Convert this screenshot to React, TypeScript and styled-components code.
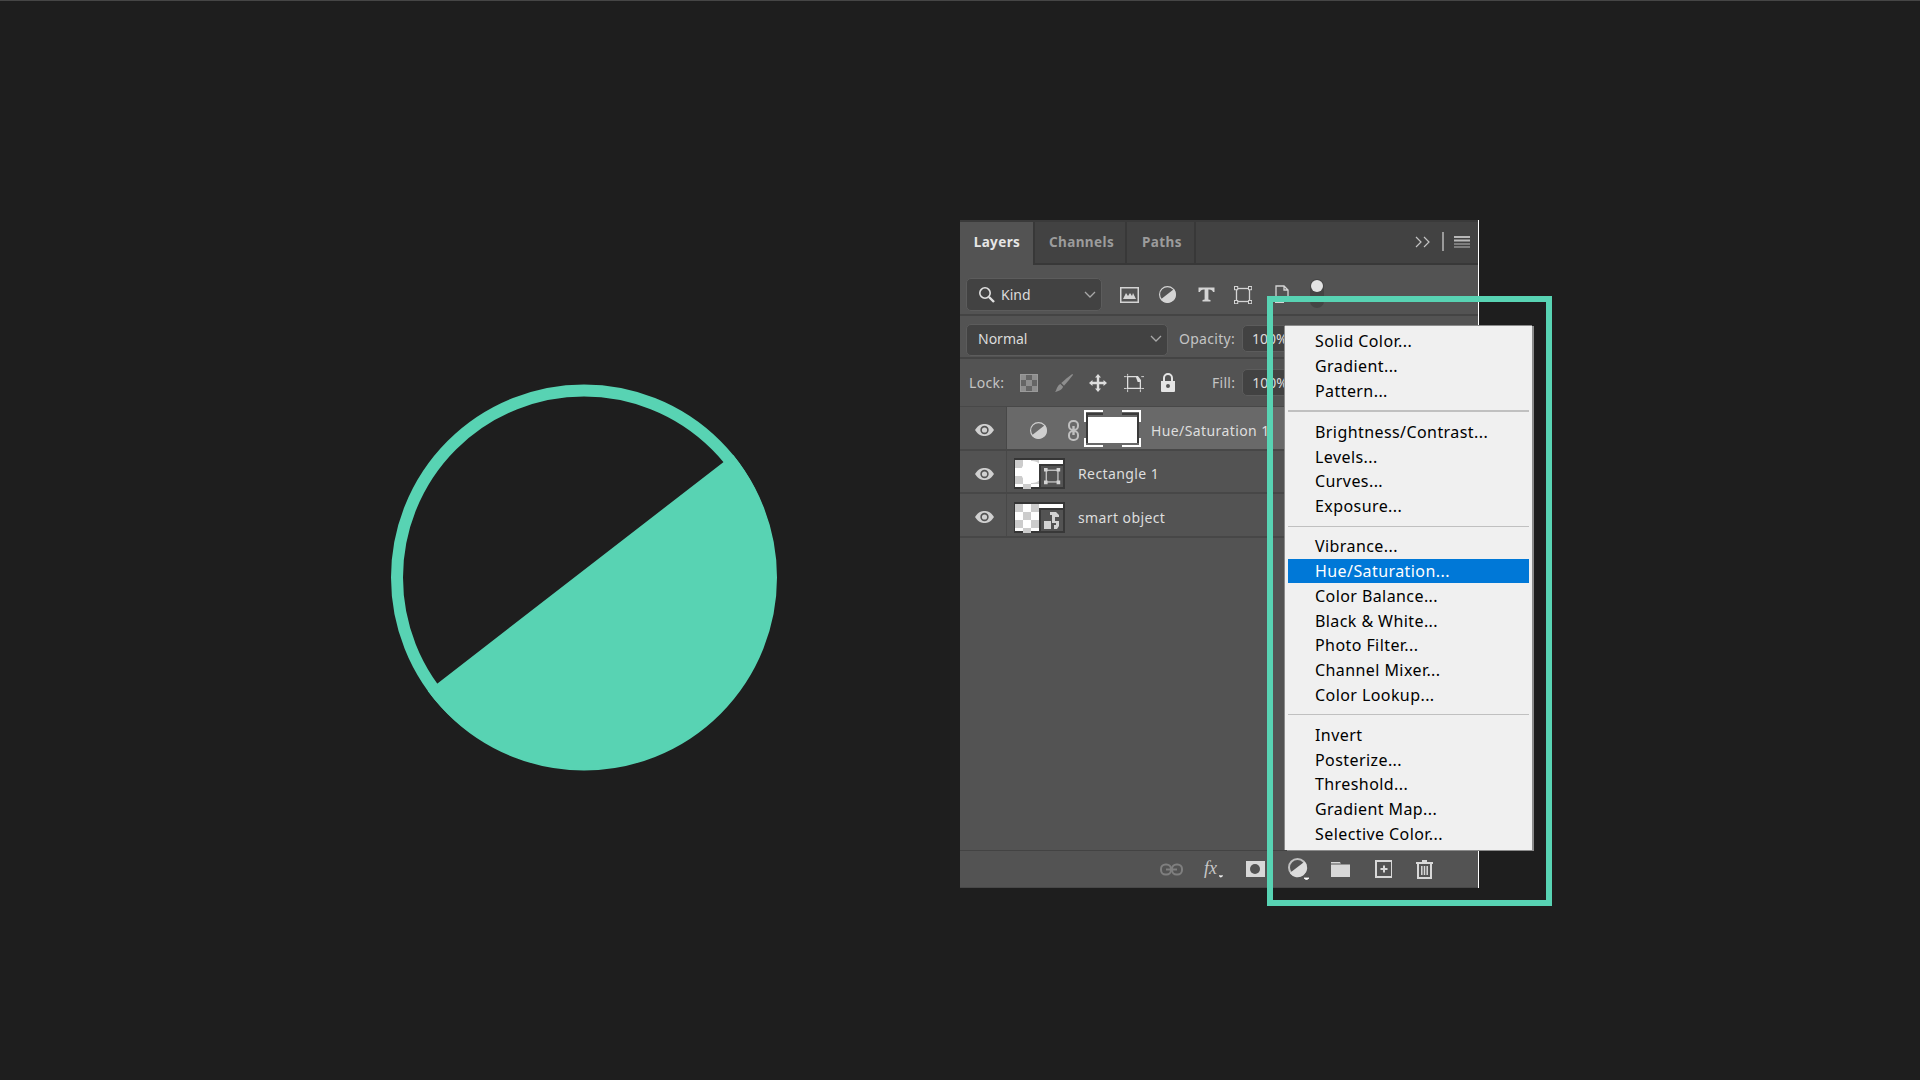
import React from 'react';
import styled, { createGlobalStyle } from 'styled-components';

const Global = createGlobalStyle`
  html, body { margin: 0; padding: 0; background: #1e1e1e; }
  body { font-family: "Noto Sans", "Liberation Sans", sans-serif; }
`;

const Stage = styled.div`
  box-sizing: border-box;
  width: 1920px;
  height: 1080px;
  overflow: hidden;
  display: flex;
  align-items: flex-start;
  background: #1e1e1e;
  border-top: 1px solid #464646;
`;

const Logo = styled.svg`
  flex: none;
  margin: 383px 0 0 391px;
`;

const Panel = styled.div`
  position: relative;
  flex: none;
  box-sizing: border-box;
  width: 519px;
  height: 668px;
  margin: 219px 0 0 183px;
  display: flex;
  flex-direction: column;
  background: #535353;
  border-right: 1px solid #ffffff;
`;

const TabBar = styled.div`
  box-sizing: border-box;
  height: 45px;
  flex: none;
  display: flex;
  background: #424242;
  border-top: 2px solid #3a3a3a;
  border-bottom: 2px solid #383838;
`;

const Tab = styled.div<{ $active?: boolean; $w: number }>`
  box-sizing: border-box;
  width: ${p => p.$w}px;
  height: ${p => (p.$active ? 43 : 41)}px;
  display: flex;
  align-items: center;
  justify-content: center;
  font: 700 13.5px "Noto Sans", sans-serif;
  letter-spacing: 0.4px;
  color: ${p => (p.$active ? '#e6e6e6' : '#9c9c9c')};
  background: ${p => (p.$active ? '#535353' : '#424242')};
  border-right: 2px solid #383838;
  position: relative;
  padding-bottom: ${p => (p.$active ? 4 : 2)}px;
  padding-left: ${p => (p.$active ? 1 : 3)}px;
`;

const TabActions = styled.div`
  margin-left: auto;
  display: flex;
  align-items: center;
  padding: 0 8px 2px 0;
  gap: 10px;
`;

const Divider = styled.div`
  width: 2px;
  height: 19px;
  margin-left: 1px;
  background: #9a9a9a;
`;

const FilterRow = styled.div`
  box-sizing: border-box;
  flex: none;
  height: 51px;
  padding: 13px 0 0 6px;
  display: flex;
  align-items: flex-start;
  border-bottom: 2px solid #444444;
`;

const BlendRow = styled.div`
  box-sizing: border-box;
  flex: none;
  height: 43px;
  padding: 7px 0 0 6px;
  display: flex;
  align-items: center;
  border-bottom: 2px solid #444444;
`;

const LockRow = styled.div`
  box-sizing: border-box;
  flex: none;
  height: 48px;
  padding: 0 0 0 9px;
  display: flex;
  align-items: center;
  border-bottom: 1px solid #484848;
`;

const Select = styled.div<{ $w: number; $h: number; $pad: number; $pb?: number }>`
  box-sizing: border-box;
  width: ${p => p.$w}px;
  height: ${p => p.$h}px;
  flex: none;
  display: flex;
  align-items: center;
  gap: 6px;
  padding: 0 5px ${p => p.$pb ?? 0}px ${p => p.$pad}px;
  background: #424242;
  border: 1.5px solid #5c5c5c;
  border-radius: 5px;
`;

const SelectLabel = styled.span`
  font: 400 14px "Noto Sans", sans-serif;
  color: #dcdcdc;
  flex: 1;
`;

const Label = styled.span<{ $w?: number; $ml?: number; $pb?: number }>`
  flex: none;
  font: 400 14px "Noto Sans", sans-serif;
  color: #c4c4c4;
  letter-spacing: 0.3px;
  margin-left: ${p => p.$ml ?? 0}px;
  padding-bottom: ${p => p.$pb ?? 0}px;
  width: ${p => (p.$w ? `${p.$w}px` : 'auto')};
  text-align: right;
`;

const NumberBox = styled.div<{ $mt?: number }>`
  box-sizing: border-box;
  flex: none;
  width: 60px;
  height: 27px;
  margin: ${p => p.$mt ?? 0}px 0 0 7px;
  padding-left: 9px;
  display: flex;
  align-items: center;
  background: #424242;
  border: 1.5px solid #5c5c5c;
  border-radius: 5px;
  font: 400 14px "Noto Sans", sans-serif;
  color: #dcdcdc;
`;

const Slot = styled.div<{ $ml?: number; $w?: number }>`
  flex: none;
  width: ${p => p.$w ?? 20}px;
  margin-left: ${p => p.$ml ?? 0}px;
  display: flex;
  align-items: center;
  justify-content: center;
`;

const FilterIcons = styled.div`
  height: 33px;
  display: flex;
  align-items: center;
`;

const Toggle = styled.div`
  position: relative;
  box-sizing: border-box;
  flex: none;
  width: 14px;
  height: 29px;
  margin: 1px 0 0 18px;
  background: #444444;
  border-radius: 7px;
`;

const ToggleKnob = styled.div`
  position: absolute;
  left: 1px;
  top: 1px;
  width: 12px;
  height: 12px;
  border-radius: 50%;
  background: #e2e2e2;
`;

const LayerRow = styled.div<{ $h: number }>`
  box-sizing: border-box;
  flex: none;
  height: ${p => p.$h}px;
  display: flex;
  align-items: stretch;
  border-bottom: 2px solid #474747;
`;

const EyeCell = styled.div`
  box-sizing: border-box;
  flex: none;
  width: 47px;
  padding: 4px 0 0 2px;
  display: flex;
  align-items: center;
  justify-content: center;
  border-right: 1px solid #484848;
`;

const LayerBody = styled.div<{ $selected?: boolean }>`
  flex: 1;
  min-width: 0;
  padding-top: 4px;
  display: flex;
  align-items: center;
  white-space: nowrap;
  overflow: hidden;
  background: ${p => (p.$selected ? '#696969' : '#535353')};
`;

const LayerName = styled.span<{ $ml: number }>`
  flex: none;
  margin-left: ${p => p.$ml}px;
  font: 400 14px "Noto Sans", sans-serif;
  letter-spacing: 0.4px;
  color: #dedede;
`;

const IconBox = styled.div<{ $ml: number; $mt?: number }>`
  flex: none;
  margin-left: ${p => p.$ml}px;
  margin-top: ${p => p.$mt ?? 0}px;
  display: flex;
  align-items: center;
`;

const Spacer = styled.div`
  flex: 1;
`;

const BottomBar = styled.div`
  box-sizing: border-box;
  flex: none;
  height: 38px;
  padding-left: 199px;
  display: flex;
  align-items: center;
  border-top: 1px solid #434343;
  border-bottom: 1px solid #484848;
`;

const BottomSlot = styled.div`
  flex: none;
  width: 24px;
  margin-right: 18.3px;
  display: flex;
  justify-content: center;
  align-items: center;
`;

const Frame = styled.div`
  position: absolute;
  box-sizing: border-box;
  left: 307px;
  top: 76px;
  width: 285px;
  height: 610px;
  border: 6px solid #58d3b3;
  pointer-events: none;
  z-index: 2;
`;

const Menu = styled.div`
  position: absolute;
  z-index: 3;
  left: 325px;
  top: 106px;
  width: 247px;
  box-sizing: border-box;
  padding: 3px 3px 4px;
  background: #f0f0f0;
  box-shadow: 2px 0 0 #8b8b8b, 0 -1px 0 #8b8b8b, -1px 0 0 #8b8b8b, 2px 1px 0 #8b8b8b;
`;

const MenuItem = styled.div<{ $active?: boolean }>`
  height: 24.72px;
  padding-left: 27px;
  display: flex;
  align-items: center;
  font: 400 16px "Noto Sans", sans-serif;
  letter-spacing: 0.42px;
  white-space: nowrap;
  color: ${p => (p.$active ? '#ffffff' : '#000000')};
  background: ${p => (p.$active ? '#0078d7' : 'transparent')};
`;

const MenuSep = styled.div<{ $h?: number }>`
  height: ${p => p.$h ?? 1}px;
  margin: 7px 0 7.5px;
  background: #c0c0c0;
`;

const Tick = styled.div<{ $top: number }>`
  position: absolute;
  left: 573px;
  top: ${p => p.$top}px;
  width: 1px;
  height: 10px;
  background: #5a5a5a;
`;

const Grip = styled.div`
  position: absolute;
  z-index: 1;
  left: 452px;
  top: 630px;
  width: 14px;
  border-top: 1px dotted #8a8a8a;
`;

const G = '#d4d4d4';

const HalfCircle = ({ size, color, stroke }: { size: number; color: string; stroke: number }) => (
  <svg width={size} height={size} viewBox="0 0 386 386">
    <circle cx="193" cy="193" r={193 - stroke / 2} fill="none" stroke={color} strokeWidth={stroke} />
    <path d="M342 70 L37 306.5 A193 193 0 1 0 342 70 Z" fill={color} />
  </svg>
);

const Chevron = () => (
  <svg width="12" height="7" viewBox="0 0 12 7">
    <path d="M1 1 L6 6 L11 1" fill="none" stroke="#a8a8a8" strokeWidth="1.3" />
  </svg>
);

const Search = () => (
  <svg width="17" height="17" viewBox="0 0 17 17" style={{ flex: 'none' }}>
    <circle cx="7" cy="7" r="5.2" fill="none" stroke="#e0e0e0" strokeWidth="1.6" />
    <path d="M11 11 L16 16" stroke="#e0e0e0" strokeWidth="2.4" />
  </svg>
);

const Collapse = () => (
  <svg width="16" height="12" viewBox="0 0 16 12">
    <path d="M1 1 L6 6 L1 11 M9 1 L14 6 L9 11" fill="none" stroke="#c4c4c4" strokeWidth="1.2" />
  </svg>
);

const Hamburger = () => (
  <svg width="16" height="12" viewBox="0 0 16 12">
    <path d="M0 1 H16 M0 4.5 H16" stroke="#b8b8b8" strokeWidth="2" />
    <path d="M0 8 H16 M0 11 H16" stroke="#b8b8b8" strokeWidth="1" />
  </svg>
);

const ImageIcon = () => (
  <svg width="19" height="16" viewBox="0 0 19 16">
    <rect x="0.75" y="0.75" width="17.5" height="14.5" fill="none" stroke={G} strokeWidth="1.5" />
    <path d="M3 12 L6 6 L8 9 L10 6 L12 9 L13 6 L16 12 Z" fill={G} />
  </svg>
);

const TypeIcon = () => (
  <svg width="17" height="15" viewBox="0 0 17 15">
    <path d="M0.5 0.5 H16.5 V5 H15 Q14.5 2.5 11 2.5 H10.4 V12.5 L12.5 13 V14.5 H4.5 V13 L6.6 12.5 V2.5 H6 Q2.5 2.5 2 5 H0.5 Z" fill={G} />
  </svg>
);

const ShapeIcon = ({ color = G, size = 18 }: { color?: string; size?: number }) => (
  <svg width={size} height={size} viewBox="0 0 18 18">
    <rect x="2.5" y="2.5" width="13" height="13" fill="none" stroke={color} strokeWidth="1.3" />
    {[[0, 0], [14, 0], [0, 14], [14, 14]].map(([x, y]) => (
      <rect key={`${x}-${y}`} x={x + 0.5} y={y + 0.5} width="3.2" height="3.2" fill="#535353" stroke={color} strokeWidth="1" />
    ))}
  </svg>
);

const DocIcon = () => (
  <svg width="14" height="19" viewBox="0 0 14 19">
    <path d="M1 1 H9 L13 5 V15 H1 Z M9 1 V5 H13" fill="none" stroke={G} strokeWidth="1.3" />
    <rect x="0" y="15" width="9" height="3" fill={G} />
  </svg>
);

const CheckerIcon = () => (
  <svg width="18" height="18" viewBox="0 0 18 18">
    <rect x="0.5" y="0.5" width="17" height="17" fill="#8e8e8e" stroke="#9a9a9a" />
    <path d="M6 1 H12 V6 H6 Z M1 6 H6 V12 H1 Z M12 6 H17 V12 H12 Z M6 12 H12 V17 H6 Z" fill="#656565" />
  </svg>
);

const BrushIcon = () => (
  <svg width="22" height="22" viewBox="0 0 22 22">
    <path d="M20 1 L21 2 C18 6 14 11 11 14 L8 11 C11 8 16 4 20 1 Z" fill="#8e8e8e" />
    <path d="M7 12 L10 15 C9 18 5 20 1 21 C3 19 3 14 7 12 Z" fill="#8e8e8e" />
  </svg>
);

const MoveIcon = () => (
  <svg width="20" height="20" viewBox="0 0 20 20">
    <path d="M10 1 L13 4.5 H11.2 V8.8 H15.5 V7 L19 10 L15.5 13 V11.2 H11.2 V15.5 H13 L10 19 L7 15.5 H8.8 V11.2 H4.5 V13 L1 10 L4.5 7 V8.8 H8.8 V4.5 H7 Z" fill="#dedede" />
  </svg>
);

const ArtboardIcon = () => (
  <svg width="22" height="20" viewBox="0 0 22 20">
    <path d="M4 3 H15 L18 7 V16 H4 Z" fill="none" stroke="#dedede" strokeWidth="1.4" />
    <path d="M13 3 H15 L18 7 V9 H15 Z" fill="#dedede" />
    <path d="M0 3 H3 M19 16 H22 M4 0 V2 M4 17 V20 M18 17 V20 M0 16 H3 M19 3 H22" stroke="#dedede" strokeWidth="1" />
  </svg>
);

const LockIcon = () => (
  <svg width="16" height="19" viewBox="0 0 16 19">
    <path d="M4 8 V5 A4 4 0 0 1 12 5 V8" fill="none" stroke="#e4e4e4" strokeWidth="2" />
    <path d="M1 8 H15 V18 A1 1 0 0 1 14 19 H2 A1 1 0 0 1 1 18 Z M8 11 A1.6 1.6 0 0 0 8 15 A1.6 1.6 0 0 0 8 11 Z" fill="#e4e4e4" fillRule="evenodd" />
  </svg>
);

const Eye = () => (
  <svg width="21" height="14" viewBox="0 0 20 14">
    <path d="M0.5 7 C4 1.5 7 1 10 1 C13 1 16 1.5 19.5 7 C16 12.5 13 13 10 13 C7 13 4 12.5 0.5 7 Z" fill="#d0d0d0" />
    <circle cx="10" cy="7" r="4.2" fill="#535353" />
    <circle cx="10" cy="7" r="2.6" fill="#d0d0d0" />
  </svg>
);

const LinkIcon = () => (
  <svg width="11" height="21" viewBox="0 0 11 21">
    <rect x="1" y="1" width="9" height="9" rx="4" fill="none" stroke="#bfbfbf" strokeWidth="2" />
    <rect x="1" y="11" width="9" height="9" rx="4" fill="none" stroke="#bfbfbf" strokeWidth="2" />
    <rect x="4.3" y="6" width="2.4" height="9" fill="#bfbfbf" />
  </svg>
);

const MaskThumb = () => (
  <svg width="57" height="37" viewBox="0 0 57 37">
    <path d="M3 33 V4 H19 M38 4 H54 V33" fill="none" stroke="#3a3a3a" strokeWidth="2" />
    <rect x="4" y="7" width="49" height="26" fill="#ffffff" />
    <path d="M1 12 V1 H19 M38 1 H56 V12 M56 28 V36 H38 M19 36 H1 V28" fill="none" stroke="#ffffff" strokeWidth="2" />
  </svg>
);

const Checker = () => {
  const cells: React.ReactNode[] = [];
  for (let r = 0; r < 4; r++) {
    for (let c = 0; c < 4; c++) {
      if ((r + c) % 2 === 0) {
        cells.push(<rect key={`${r}-${c}`} x={1 + c * 8} y={2 + r * 8} width="8" height="8" fill="#cccccc" />);
      }
    }
  }
  return <>{cells}</>;
};

const RectThumb = () => (
  <svg width="51" height="31" viewBox="0 0 51 31">
    <rect width="51" height="31" fill="#353535" />
    <rect x="1" y="2" width="48" height="27" fill="#ffffff" />
    <Checker />
    <circle cx="18" cy="14" r="11" fill="#ffffff" />
    <rect x="25" y="6" width="26" height="25" fill="#383838" />
    <rect x="27" y="8" width="22" height="21" fill="#535353" />
    <g transform="translate(30 10) scale(0.9)">
      <rect x="2.5" y="2.5" width="13" height="13" fill="none" stroke={G} strokeWidth="1.3" />
      <path d="M0 0 H4 V4 H0 Z M14 0 H18 V4 H14 Z M0 14 H4 V18 H0 Z M14 14 H18 V18 H14 Z" fill={G} />
    </g>
  </svg>
);

const SmartThumb = () => (
  <svg width="51" height="31" viewBox="0 0 51 31">
    <rect width="51" height="31" fill="#353535" />
    <rect x="1" y="2" width="48" height="27" fill="#ffffff" />
    <Checker />
    <rect x="25" y="6" width="26" height="25" fill="#383838" />
    <rect x="27" y="8" width="22" height="21" fill="#535353" />
    <path d="M36 10 H42 L45 13 V15 H41 V19 H45 V24 L43 27 H40 V23 H42 V21 H38 V13 H36 Z M30 19 H37 V27 H30 Z" fill={G} />
  </svg>
);

const ChainIcon = () => (
  <svg width="23" height="13" viewBox="0 0 23 13">
    <rect x="1" y="1.5" width="10" height="10" rx="4.5" fill="none" stroke="#7f7f7f" strokeWidth="2" />
    <rect x="12" y="1.5" width="10" height="10" rx="4.5" fill="none" stroke="#7f7f7f" strokeWidth="2" />
    <rect x="6" y="5.5" width="11" height="2" fill="#7f7f7f" />
  </svg>
);

const FxIcon = () => (
  <svg width="32" height="24" viewBox="0 0 32 24">
    <text x="4" y="18" fontFamily="'Liberation Serif', serif" fontStyle="italic" fontSize="24" fill="#c8c8c8">fx</text>
    <path d="M24 21 H29 L26.5 23 Z" fill="#ffffff" stroke="#ffffff" strokeWidth="0.8" />
  </svg>
);

const MaskIcon = () => (
  <svg width="20" height="16" viewBox="1 0 20 16">
    <rect width="20" height="16" fill="#d8d8d8" />
    <circle cx="10" cy="8" r="5" fill="#535353" />
  </svg>
);

const FolderIcon = () => (
  <svg width="19" height="15" viewBox="0 0 19 15">
    <path d="M0 0 H9 L10 2 H19 V15 H0 Z" fill="#d8d8d8" />
    <rect x="0" y="1.5" width="19" height="1" fill="#535353" />
  </svg>
);

const NewIcon = () => (
  <svg width="20" height="18" viewBox="-3 0 20 18">
    <rect x="1" y="1" width="16" height="16" fill="none" stroke="#d8d8d8" strokeWidth="2" />
    <path d="M5.5 9 H12.5 M9 5.5 V12.5" stroke="#d8d8d8" strokeWidth="2" />
  </svg>
);

const TrashIcon = () => (
  <svg width="17" height="19" viewBox="0 0 17 19">
    <path d="M6 1 H11 M0 3 H17" stroke="#d8d8d8" strokeWidth="2" fill="none" />
    <path d="M2 4 V18 H15 V4" stroke="#d8d8d8" strokeWidth="2" fill="none" />
    <path d="M5.8 6 V15 M8.5 6 V15 M11.2 6 V15" stroke="#d8d8d8" strokeWidth="1.5" />
  </svg>
);

const AdjustWithArrow = () => (
  <svg width="24" height="22" viewBox="-2 0 24 22">
    <circle cx="9.5" cy="9.5" r="8.5" fill="none" stroke="#c0c0c0" strokeWidth="2" />
    <path d="M16.8 3.5 L1.8 15.1 A9.5 9.5 0 1 0 16.8 3.5 Z" fill="#dcdcdc" />
    <path d="M16 20 H21 L18.5 22 Z" fill="#ffffff" stroke="#ffffff" strokeWidth="0.8" />
  </svg>
);

const menuGroups: { label: string; active?: boolean }[][] = [
  [{ label: 'Solid Color...' }, { label: 'Gradient...' }, { label: 'Pattern...' }],
  [{ label: 'Brightness/Contrast...' }, { label: 'Levels...' }, { label: 'Curves...' }, { label: 'Exposure...' }],
  [
    { label: 'Vibrance...' },
    { label: 'Hue/Saturation...', active: true },
    { label: 'Color Balance...' },
    { label: 'Black & White...' },
    { label: 'Photo Filter...' },
    { label: 'Channel Mixer...' },
    { label: 'Color Lookup...' },
  ],
  [{ label: 'Invert' }, { label: 'Posterize...' }, { label: 'Threshold...' }, { label: 'Gradient Map...' }, { label: 'Selective Color...' }],
];

export default function App() {
  return (
    <>
      <Global />
      <Stage>
        <Logo width="386" height="387" viewBox="0 0 386 387">
          <circle cx="193" cy="193.5" r="187" fill="none" stroke="#58d3b3" strokeWidth="12" />
          <path d="M342 70.7 L36.8 306.9 A193 193 0 1 0 342 70.7 Z" fill="#58d3b3" />
        </Logo>
        <Panel>
          <TabBar>
            <Tab $active $w={75}>Layers</Tab>
            <Tab $w={92}>Channels</Tab>
            <Tab $w={69}>Paths</Tab>
            <TabActions>
              <Collapse />
              <Divider />
              <Hamburger />
            </TabActions>
          </TabBar>
          <FilterRow>
            <Select $w={136} $h={33} $pad={11}>
              <Search />
              <SelectLabel>Kind</SelectLabel>
              <Chevron />
            </Select>
            <FilterIcons>
              <Slot $ml={17}><ImageIcon /></Slot>
              <Slot $ml={18}><HalfCircle size={17} color={G} stroke={26} /></Slot>
              <Slot $ml={19}><TypeIcon /></Slot>
              <Slot $ml={17}><ShapeIcon /></Slot>
              <Slot $ml={19}><DocIcon /></Slot>
            </FilterIcons>
            <Toggle><ToggleKnob /></Toggle>
          </FilterRow>
          <BlendRow>
            <Select $w={202} $h={32} $pad={11} $pb={3}>
              <SelectLabel>Normal</SelectLabel>
              <Chevron />
            </Select>
            <Label $ml={9} $w={58} $pb={3}>Opacity:</Label>
            <NumberBox $mt={-3}>100%</NumberBox>
          </BlendRow>
          <LockRow>
            <Label>Lock:</Label>
            <Slot $ml={15}><CheckerIcon /></Slot>
            <Slot $ml={15}><BrushIcon /></Slot>
            <Slot $ml={14}><MoveIcon /></Slot>
            <Slot $ml={16}><ArtboardIcon /></Slot>
            <Slot $ml={14}><LockIcon /></Slot>
            <Label $ml={25} $w={32}>Fill:</Label>
            <NumberBox>100%</NumberBox>
          </LockRow>
          <LayerRow $h={44}>
            <EyeCell><Eye /></EyeCell>
            <LayerBody $selected>
              <IconBox $ml={23}><HalfCircle size={17} color="#cfcfcf" stroke={26} /></IconBox>
              <IconBox $ml={21}><LinkIcon /></IconBox>
              <IconBox $ml={5} $mt={-4}><MaskThumb /></IconBox>
              <LayerName $ml={10}>Hue/Saturation 1</LayerName>
            </LayerBody>
          </LayerRow>
          <LayerRow $h={43}>
            <EyeCell><Eye /></EyeCell>
            <LayerBody>
              <IconBox $ml={7}><RectThumb /></IconBox>
              <LayerName $ml={13}>Rectangle 1</LayerName>
            </LayerBody>
          </LayerRow>
          <LayerRow $h={44}>
            <EyeCell><Eye /></EyeCell>
            <LayerBody>
              <IconBox $ml={7}><SmartThumb /></IconBox>
              <LayerName $ml={13}>smart object</LayerName>
            </LayerBody>
          </LayerRow>
          <Spacer />
          <BottomBar>
            <BottomSlot><ChainIcon /></BottomSlot>
            <BottomSlot><FxIcon /></BottomSlot>
            <BottomSlot><MaskIcon /></BottomSlot>
            <BottomSlot><AdjustWithArrow /></BottomSlot>
            <BottomSlot><FolderIcon /></BottomSlot>
            <BottomSlot><NewIcon /></BottomSlot>
            <BottomSlot><TrashIcon /></BottomSlot>
          </BottomBar>
          <Grip />
          <Tick $top={118} />
          <Tick $top={158} />
          <Frame />
          <Menu>
            {menuGroups.map((group, i) => (
              <React.Fragment key={i}>
                {i > 0 && <MenuSep $h={i === 1 ? 2 : 1} />}
                {group.map(item => (
                  <MenuItem key={item.label} $active={item.active}>{item.label}</MenuItem>
                ))}
              </React.Fragment>
            ))}
          </Menu>
        </Panel>
      </Stage>
    </>
  );
}
